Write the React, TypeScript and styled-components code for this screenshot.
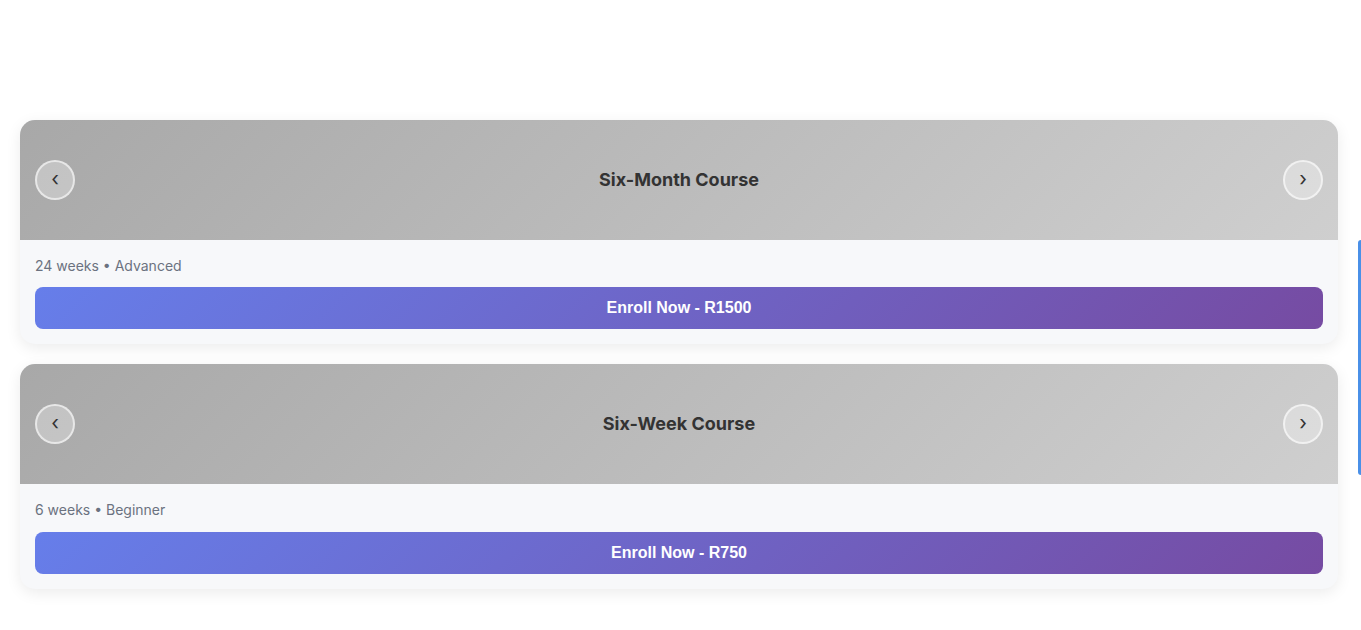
import React from "react";
import styled, { createGlobalStyle } from "styled-components";

const GlobalStyle = createGlobalStyle`
  * { box-sizing: border-box; }
  html, body { margin: 0; padding: 0; background: #ffffff; }
  body { font-family: Inter, "Noto Sans", sans-serif; }
`;

const Page = styled.main`
  padding: 120px 23px 40px 20px;
  display: flex;
  flex-direction: column;
  gap: 20px;
`;

const Card = styled.section`
  border-radius: 15px;
  overflow: hidden;
  background: #f7f8fa;
  box-shadow: 0 4px 15px rgba(0, 0, 0, 0.08);
`;

const Header = styled.div`
  height: 120px;
  padding: 0 15px;
  display: flex;
  align-items: center;
  justify-content: space-between;
  background: linear-gradient(135deg, #a8a8a8 0%, #cfcfcf 100%);
`;

const Title = styled.h3`
  margin: 0 0 1px 0;
  font-family: Inter, "Noto Sans", sans-serif;
  font-size: 18px;
  line-height: 22px;
  font-weight: 700;
  color: #333333;
`;

const NavButton = styled.button`
  width: 40px;
  height: 40px;
  border-radius: 50%;
  border: 2px solid rgba(255, 255, 255, 0.6);
  background: rgba(255, 255, 255, 0.3);
  color: #333333;
  font-family: Inter, "Noto Sans", sans-serif;
  font-size: 20px;
  line-height: 1;
  display: flex;
  align-items: center;
  justify-content: center;
  padding: 0 0 2px 0;
  cursor: pointer;
`;

const Body = styled.div`
  padding: 15px;
  display: flex;
  flex-direction: column;
  gap: 10px;
`;

const Meta = styled.div`
  font-size: 14px;
  line-height: 1.6;
  color: #6b7280;
`;

const Enroll = styled.button`
  height: 42px;
  border: none;
  border-radius: 8px;
  background: linear-gradient(135deg, #667eea 0%, #764ba2 100%);
  color: #ffffff;
  font-family: "Liberation Sans", Arial, sans-serif;
  font-size: 16px;
  font-weight: 700;
  cursor: pointer;
`;

const SideTab = styled.div`
  position: fixed;
  right: 0;
  top: 240px;
  width: 3px;
  height: 235px;
  background: #4a90e8;
  border-radius: 3px 0 0 3px;
`;

const courses = [
  { title: "Six-Month Course", meta: "24 weeks • Advanced", price: "R1500" },
  { title: "Six-Week Course", meta: "6 weeks • Beginner", price: "R750" },
];

export default function App() {
  return (
    <>
      <GlobalStyle />
      <Page>
        {courses.map((c) => (
          <Card key={c.title}>
            <Header>
              <NavButton aria-label="Previous">‹</NavButton>
              <Title>{c.title}</Title>
              <NavButton aria-label="Next">›</NavButton>
            </Header>
            <Body>
              <Meta>{c.meta}</Meta>
              <Enroll>Enroll Now - {c.price}</Enroll>
            </Body>
          </Card>
        ))}
      </Page>
      <SideTab />
    </>
  );
}
